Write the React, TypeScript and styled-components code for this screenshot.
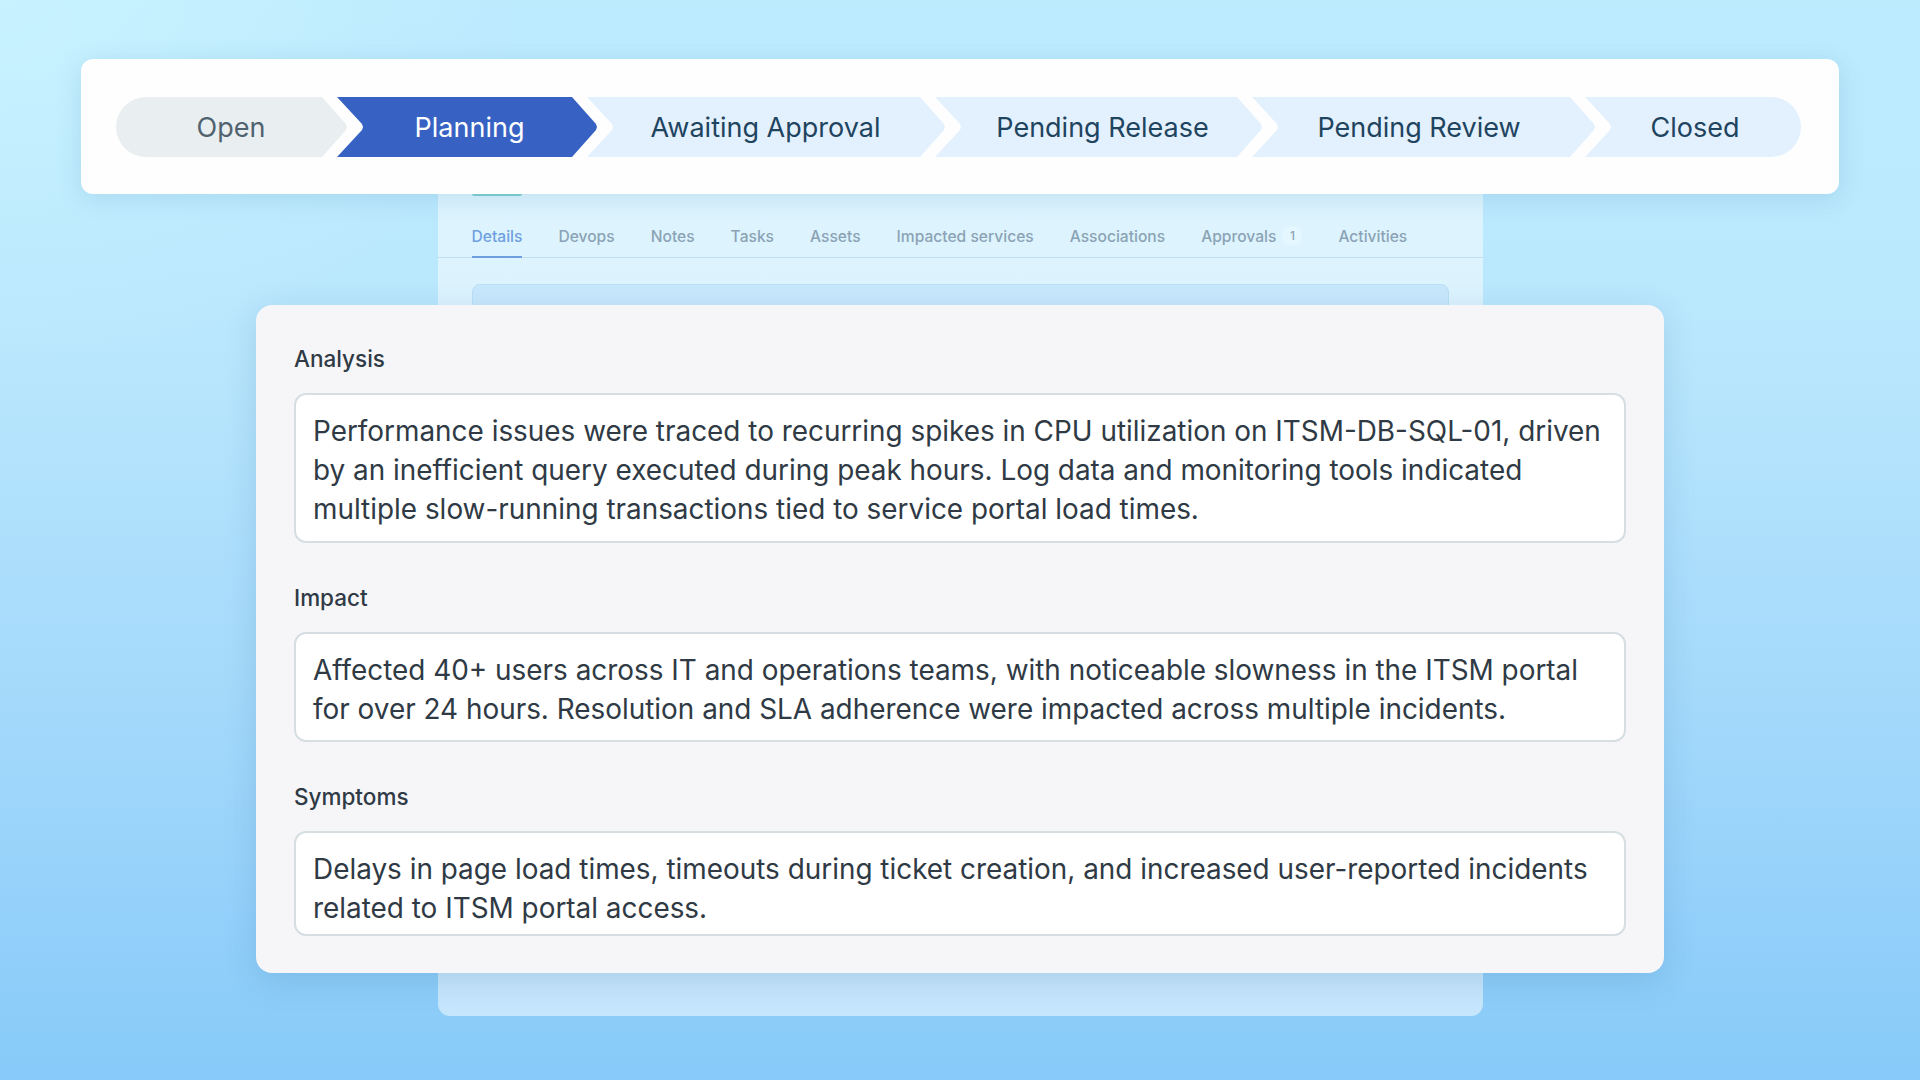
import React from 'react';
import styled, { createGlobalStyle } from 'styled-components';

const GlobalStyle = createGlobalStyle`
  html, body {
    margin: 0;
    padding: 0;
    height: 100%;
  }
  body {
    font-family: Inter, "Noto Sans", "Liberation Sans", sans-serif;
  }
`;

const Page = styled.div`
  width: 1920px;
  height: 1080px;
  overflow: hidden;
  box-sizing: border-box;
  padding: 59px 81px 0;
  background:
    radial-gradient(ellipse 520px 360px at 0 0, rgba(205, 245, 255, 0.7), rgba(205, 245, 255, 0)),
    linear-gradient(180deg, #bdebfe 0%, #b9e7fd 32%, #a4d9fb 65%, #87caf9 100%);
`;

const StepperCard = styled.div`
  position: relative;
  z-index: 2;
  height: 135px;
  box-sizing: border-box;
  padding: 38px 36px 0 35px;
  background: #fefefe;
  border-radius: 12px;
  box-shadow: 0 4px 24px rgba(60, 130, 170, 0.18);
`;

const Stepper = styled.div`
  display: flex;
  height: 60px;
`;

type StepKind = 'open' | 'active' | 'todo';

const stepBg = { open: '#e9eff1', active: '#3762c4', todo: '#e3f1fe' };
const stepFg = { open: '#50636f', active: '#ffffff', todo: '#1f4460' };

const Step = styled.div<{ $kind: StepKind; $w: number; $first?: boolean; $last?: boolean; $shift: number }>`
  flex: none;
  width: ${p => p.$w}px;
  margin-left: ${p => (p.$first ? 0 : -11)}px;
  box-sizing: border-box;
  padding: 1px ${p => Math.max(0, -p.$shift)}px 0 ${p => Math.max(0, p.$shift)}px;
  display: flex;
  align-items: center;
  justify-content: center;
  font-size: 27px;
  background: ${p => stepBg[p.$kind]};
  color: ${p => stepFg[p.$kind]};
  border-radius: ${p => (p.$first ? '30px 0 0 30px' : p.$last ? '0 30px 30px 0' : '0')};
  clip-path: polygon(
    0 0,
    ${p => (p.$last ? '100% 0, 100% 100%' : 'calc(100% - 26px) 0, calc(100% - 2px) 45%, calc(100% - 1px) 50%, calc(100% - 2px) 55%, calc(100% - 26px) 100%')},
    0 100%
    ${p => (p.$first ? '' : ', 25px 55%, 26px 50%, 25px 45%')}
  );
`;

const Stage = styled.div`
  display: grid;
  justify-content: center;
`;

const BackPanel = styled.div`
  grid-area: 1 / 1;
  justify-self: center;
  width: 1045px;
  height: 822px;
  box-sizing: border-box;
  padding: 0 34px;
  background: rgba(255, 255, 255, 0.5);
  border-radius: 0 0 12px 12px;
`;

const TealBar = styled.div`
  width: 50px;
  height: 2px;
  background: #7fd0d0;
  border-radius: 0 0 2px 2px;
`;

const Tabs = styled.div`
  display: flex;
  align-items: stretch;
  gap: 36px;
  height: 62px;
  margin: 0 -34px;
  padding: 0 34px;
  box-sizing: border-box;
  border-bottom: 1px solid #bfdff0;
`;

const Tab = styled.div<{ $active?: boolean }>`
  display: flex;
  align-items: center;
  gap: 6px;
  padding-top: 20px;
  font-size: 15.6px;
  font-weight: 500;
  color: ${p => (p.$active ? '#6f9fe0' : '#8ba3b5')};
  border-bottom: 2px solid ${p => (p.$active ? '#6f9fe0' : 'transparent')};
  margin-bottom: -1px;
`;

const TabCount = styled.span`
  width: 20px;
  height: 20px;
  border-radius: 50%;
  background: rgba(255, 255, 255, 0.25);
  font-size: 12px;
  text-align: center;
  line-height: 20px;
`;

const InnerBox = styled.div`
  margin-top: 26px;
  height: 60px;
  background: #c8e8fc;
  border: 1px solid #b8dff7;
  border-radius: 8px;
`;

const MainCard = styled.div`
  grid-area: 1 / 1;
  justify-self: center;
  align-self: start;
  margin-top: 111px;
  width: 1408px;
  height: 668px;
  box-sizing: border-box;
  padding: 38px 38px 36px;
  background: #f6f6f9;
  border-radius: 16px;
  box-shadow: 0 8px 32px rgba(40, 100, 150, 0.18);
`;

const Field = styled.div`
  margin-bottom: 39px;
  &:last-child {
    margin-bottom: 0;
  }
`;

const Label = styled.div`
  font-size: 22.5px;
  line-height: 32px;
  font-weight: 500;
  color: #2f3a45;
  margin-bottom: 18px;
`;

const ValueBox = styled.div<{ $h: number }>`
  height: ${p => p.$h}px;
  box-sizing: border-box;
  padding: 17px 17px 0;
  background: #ffffff;
  border: 2px solid #d6dee2;
  border-radius: 12px;
  font-size: 27.9px;
  line-height: 39px;
  color: #2f3a45;
`;

const steps: { label: string; kind: StepKind; w: number; shift: number }[] = [
  { label: 'Open', kind: 'open', w: 232, shift: -2 },
  { label: 'Planning', kind: 'active', w: 261, shift: 4 },
  { label: 'Awaiting Approval', kind: 'todo', w: 359, shift: -2 },
  { label: 'Pending Release', kind: 'todo', w: 328, shift: 7 },
  { label: 'Pending Review', kind: 'todo', w: 344, shift: -10 },
  { label: 'Closed', kind: 'todo', w: 216, shift: 4 },
];

const tabs = ['Details', 'Devops', 'Notes', 'Tasks', 'Assets', 'Impacted services', 'Associations', 'Approvals', 'Activities'];

const fields = [
  {
    label: 'Analysis',
    height: 150,
    text: 'Performance issues were traced to recurring spikes in CPU utilization on ITSM-DB-SQL-01, driven by an inefficient query executed during peak hours. Log data and monitoring tools indicated multiple slow-running transactions tied to service portal load times.',
  },
  {
    label: 'Impact',
    height: 110,
    text: 'Affected 40+ users across IT and operations teams, with noticeable slowness in the ITSM portal for over 24 hours. Resolution and SLA adherence were impacted across multiple incidents.',
  },
  {
    label: 'Symptoms',
    height: 105,
    text: 'Delays in page load times, timeouts during ticket creation, and increased user-reported incidents related to ITSM portal access.',
  },
];

export default function App() {
  return (
    <Page>
      <GlobalStyle />
      <StepperCard>
        <Stepper>
          {steps.map((s, i) => (
            <Step key={s.label} $kind={s.kind} $w={s.w} $shift={s.shift} $first={i === 0} $last={i === steps.length - 1}>
              {s.label}
            </Step>
          ))}
        </Stepper>
      </StepperCard>
      <Stage>
        <BackPanel>
          <TealBar />
          <Tabs>
            {tabs.map(t => (
              <Tab key={t} $active={t === 'Details'}>
                {t}
                {t === 'Approvals' && <TabCount>1</TabCount>}
              </Tab>
            ))}
          </Tabs>
          <InnerBox />
        </BackPanel>
        <MainCard>
          {fields.map(f => (
            <Field key={f.label}>
              <Label>{f.label}</Label>
              <ValueBox $h={f.height}>{f.text}</ValueBox>
            </Field>
          ))}
        </MainCard>
      </Stage>
    </Page>
  );
}
